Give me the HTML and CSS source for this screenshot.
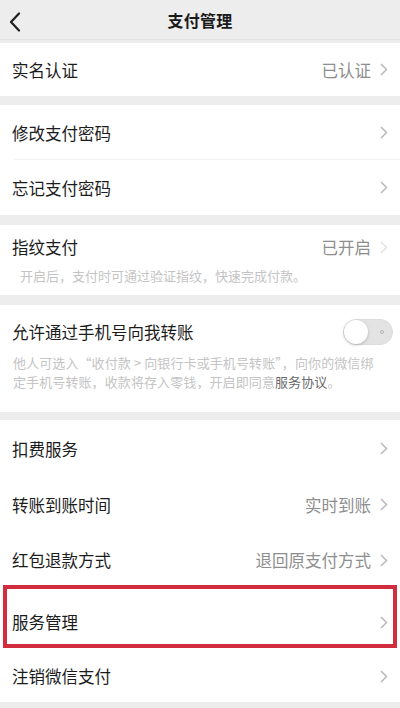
FILE: index.html
```html
<!DOCTYPE html>
<html lang="zh-CN">
<head>
<meta charset="utf-8">
<title>支付管理</title>
<link rel="stylesheet" href="styles.css">
</head>
<body>
<div class="page">
  <header class="nav">
    <span class="back">
      <svg width="12" height="20" viewBox="0 0 12 20"><path d="M10 1.5 L2 10 L10 18.5" fill="none" stroke="#1f1f1f" stroke-width="2.2" stroke-linecap="round" stroke-linejoin="round"/></svg>
    </span>
    <h1 class="title">支付管理</h1>
  </header>

  <section class="group g1">
    <div class="row r53">
      <span class="label">实名认证</span>
      <span class="value">已认证</span>
      <span class="chev"><svg width="8" height="13" viewBox="0 0 8 13"><path d="M1 1 L6.5 6.5 L1 12" fill="none" stroke="#b9b9b9" stroke-width="1.5"/></svg></span>
    </div>
  </section>

  <section class="group g2">
    <div class="row r55 sep">
      <span class="label">修改支付密码</span>
      <span class="chev"><svg width="8" height="13" viewBox="0 0 8 13"><path d="M1 1 L6.5 6.5 L1 12" fill="none" stroke="#b9b9b9" stroke-width="1.5"/></svg></span>
    </div>
    <div class="row r55">
      <span class="label">忘记支付密码</span>
      <span class="chev"><svg width="8" height="13" viewBox="0 0 8 13"><path d="M1 1 L6.5 6.5 L1 12" fill="none" stroke="#b9b9b9" stroke-width="1.5"/></svg></span>
    </div>
  </section>

  <section class="group g3">
    <div class="row-inline">
      <span class="label">指纹支付</span>
      <span class="value">已开启</span>
      <span class="chev"><svg width="8" height="13" viewBox="0 0 8 13"><path d="M1 1 L6.5 6.5 L1 12" fill="none" stroke="#e2e2e2" stroke-width="1.5"/></svg></span>
    </div>
    <p class="desc d3">开启后，支付时可通过验证指纹，快速完成付款。</p>
  </section>

  <section class="group g4">
    <div class="row-inline">
      <span class="label">允许通过手机号向我转账</span>
      <span class="toggle"><span class="knob"></span><span class="ring"></span></span>
    </div>
    <p class="desc d4">他人可选入“收付款 &gt; 向银行卡或手机号转账”，向你的微信绑<br>定手机号转账，收款将存入零钱，开启即同意<span class="link">服务协议</span>。</p>
  </section>

  <section class="group g5">
    <div class="row r57">
      <span class="label">扣费服务</span>
      <span class="chev"><svg width="8" height="13" viewBox="0 0 8 13"><path d="M1 1 L6.5 6.5 L1 12" fill="none" stroke="#b9b9b9" stroke-width="1.5"/></svg></span>
    </div>
    <div class="row r55">
      <span class="label">转账到账时间</span>
      <span class="value">实时到账</span>
      <span class="chev"><svg width="8" height="13" viewBox="0 0 8 13"><path d="M1 1 L6.5 6.5 L1 12" fill="none" stroke="#b9b9b9" stroke-width="1.5"/></svg></span>
    </div>
    <div class="row r56">
      <span class="label">红包退款方式</span>
      <span class="value">退回原支付方式</span>
      <span class="chev"><svg width="8" height="13" viewBox="0 0 8 13"><path d="M1 1 L6.5 6.5 L1 12" fill="none" stroke="#b9b9b9" stroke-width="1.5"/></svg></span>
    </div>
    <div class="row r62 marked">
      <span class="label">服务管理</span>
      <span class="chev"><svg width="8" height="13" viewBox="0 0 8 13"><path d="M1 1 L6.5 6.5 L1 12" fill="none" stroke="#b9b9b9" stroke-width="1.5"/></svg></span>
    </div>
    <div class="row r52">
      <span class="label">注销微信支付</span>
      <span class="chev"><svg width="8" height="13" viewBox="0 0 8 13"><path d="M1 1 L6.5 6.5 L1 12" fill="none" stroke="#b9b9b9" stroke-width="1.5"/></svg></span>
    </div>
  </section>
</div>
</body>
</html>
```

FILE: styles.css
```css
* { box-sizing: border-box; margin: 0; padding: 0; }
html, body { width: 400px; height: 708px; overflow: hidden; }
body {
  background: #ededed;
  font-family: "Noto Sans CJK SC", "Noto Sans", sans-serif;
  color: #1c1c1c;
}
.page { display: flex; flex-direction: column; }

.nav {
  height: 40px;
  background: #ededed;
  display: flex;
  align-items: center;
  justify-content: center;
  position: relative;
  border-bottom: 1px solid #e4e4e4;
}
.back {
  position: absolute;
  left: 9px;
  top: 12px;
  display: flex;
}
.title {
  font-size: 16px;
  font-weight: 700;
  line-height: 22px;
  color: #1a1a1a;
  letter-spacing: 0.3px;
}

.group { background: #fff; }
.g1 { margin-top: 3px; }
.g2 { margin-top: 9px; }
.g3 { margin-top: 10px; padding: 11px 0 10px; }
.g4 { margin-top: 10px; padding: 16px 0 21px; }
.g5 { margin-top: 8px; }

.row {
  display: flex;
  align-items: center;
  padding: 0 12px 0 12px;
  position: relative;
}
.r52 { height: 52px; }
.r53 { height: 53px; }
.r55 { height: 55px; }
.r56 { height: 56px; }
.r57 { height: 57px; }
.r62 { height: 62px; padding-top: 6px; }

.sep::after {
  content: "";
  position: absolute;
  left: 13px;
  right: 0;
  bottom: 0;
  height: 1px;
  background: #f1f1f1;
}

.row-inline {
  display: flex;
  align-items: center;
  height: 22px;
  padding: 0 12px;
}

.label {
  font-size: 16.5px;
  line-height: 22px;
  color: #1c1c1c;
  flex: 1;
  white-space: nowrap;
}
.value {
  font-size: 16.5px;
  line-height: 22px;
  color: #8e8e8e;
  margin-right: 9px;
  white-space: nowrap;
}
.chev { display: flex; width: 8px; }

.desc {
  font-size: 13px;
  color: #c4c4c4;
  white-space: nowrap;
}
.d3 { margin-top: 9px; line-height: 18px; padding-left: 20px; }
.d4 { margin-top: 10px; line-height: 19px; padding-left: 13px; letter-spacing: 0.1px; }
.link { color: #6a6a6a; }

.toggle {
  width: 50px;
  height: 26px;
  border-radius: 13px;
  background: #e3e3e3;
  border: 1px solid #dcdcdc;
  position: relative;
  margin-right: -5px;
  margin-top: -1px;
}
.knob {
  position: absolute;
  left: 0;
  top: 0;
  width: 24px;
  height: 24px;
  border-radius: 50%;
  background: #fff;
  box-shadow: 0 1px 3px rgba(0,0,0,0.22);
}
.ring {
  position: absolute;
  right: 8px;
  top: 10px;
  width: 4px;
  height: 4px;
  border-radius: 50%;
  border: 1px solid #b8b8b8;
}

.marked::before {
  content: "";
  position: absolute;
  left: 3px;
  right: 3px;
  top: -3px;
  bottom: 2px;
  border: 4px solid #d22c3f;
  pointer-events: none;
}
```
